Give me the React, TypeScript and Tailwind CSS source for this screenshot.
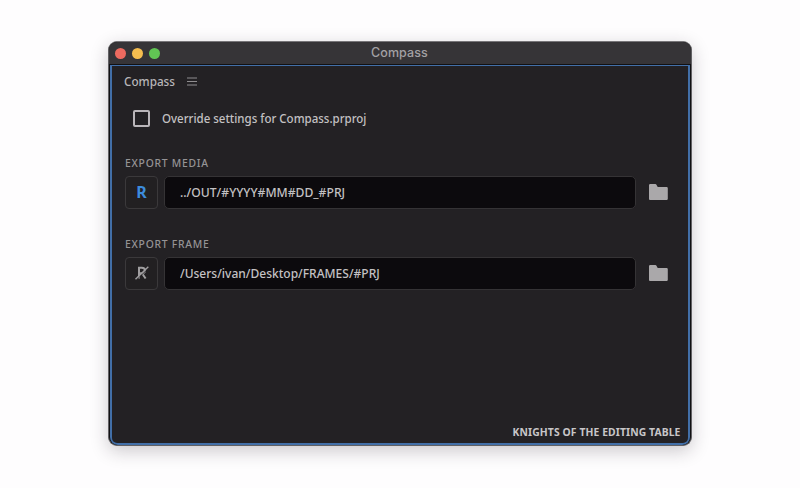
import React from 'react';

function Folder() {
  return (
    <svg width="20" height="18" viewBox="0 0 20 18" className="block" fill="#aaa8aa">
      <path d="M1 16V2.2Q1 1 2.2 1H7.3Q8.2 1 8.6 1.9L9.7 4H18.6Q19.8 4 19.8 5.2V15.8Q19.8 17 18.6 17H2Q1 17 1 16Z" />
    </svg>
  );
}

function SlashedR() {
  return (
    <svg width="18" height="18" viewBox="0 0 18 18" fill="none">
      <path d="M6 14.5V3.8H8.8Q12 3.8 12 6.5Q12 9.2 8.8 9.2H6M9 9.2L12.6 14.5" stroke="#a09ea0" strokeWidth="2" />
      <path d="M3.4 15.9L15.9 3.9" stroke="#222022" strokeWidth="1" />
      <path d="M2.5 15.3L15.3 2.8" stroke="#a09ea0" strokeWidth="1.4" />
    </svg>
  );
}

function ExportRow({ label, value, relative, valueClass }: {
  label: string;
  value: string;
  relative: boolean;
  valueClass: string;
}) {
  return (
    <section className="h-[81px]">
      <div className="h-[20px] origin-left scale-x-[0.94] whitespace-nowrap text-[11px] font-medium leading-[14px] tracking-[0.8px] text-[#959395]">{label}</div>
      <div className="flex h-[32px] items-center">
        <button className="flex h-[33px] w-[33px] shrink-0 items-center justify-center rounded-[4px] border border-[#3b393b] bg-[#222022]">
          {relative ? (
            <span className="text-[16px] font-bold leading-[18px] text-[#3c8bdc]">R</span>
          ) : (
            <SlashedR />
          )}
        </button>
        <div className="ml-[6px] flex h-[33px] w-[472px] items-center rounded-[5px] border border-[#353335] bg-[#0c0a0d] pb-[1px] pl-[15px]">
          <span className={`inline-block origin-left whitespace-nowrap text-[13px] font-medium leading-[18px] text-[#c3c1c3] ${valueClass}`}>{value}</span>
        </div>
        <div className="ml-[12px]"><Folder /></div>
      </div>
    </section>
  );
}

export default function App() {
  return (
    <div className="h-[488px] w-[800px] overflow-hidden bg-[#fefdfe] pl-[108px] pt-[41px] font-['Noto_Sans',sans-serif]">
      <main className="flex h-[405px] w-[584px] flex-col overflow-hidden rounded-[9px] border border-[#626164] border-t-[#777578] bg-[#111012] shadow-[0_5px_18px_rgba(35,25,40,0.23)]">
        <header className="flex h-[22px] shrink-0 items-center bg-[#363437] pl-[6px]">
          <div className="flex w-[120px] gap-[6px]">
            <i className="h-[11px] w-[11px] rounded-full bg-[#ed6a5f]" />
            <i className="h-[11px] w-[11px] rounded-full bg-[#f5bd4f]" />
            <i className="h-[11px] w-[11px] rounded-full bg-[#61c454]" />
          </div>
          <h1 className="ml-[136px] whitespace-nowrap font-['Inter',sans-serif] text-[12.5px] font-medium leading-[20px] tracking-[0.1px] text-[#a3a1a4]">Compass</h1>
        </header>
        <div className="mt-[1px] flex flex-1 flex-col rounded-b-[8px] bg-[#426fa8] px-[2px] pb-[2px] pt-px mx-px">
          <div className="flex flex-1 flex-col rounded-b-[5px] bg-[#232124]">
            <div className="flex h-[30px] items-center pl-[12px]">
              <span className="w-[51px] origin-left scale-x-[0.9] text-[13px] font-medium leading-[18px] text-[#b8b6b8]">Compass</span>
              <svg className="ml-[12px]" width="10" height="9" viewBox="0 0 10 9" stroke="#8f8d8f">
                <path d="M0 1H10M0 4.5H10M0 8H10" />
              </svg>
            </div>
            <label className="flex h-[44px] items-center pl-[21px]">
              <span className="h-[17px] w-[17px] rounded-[2px] border-2 border-[#bab6ba]" />
              <span className="ml-[12px] origin-left scale-x-[0.885] whitespace-nowrap text-[13px] font-medium leading-[18px] text-[#c3c1c3]">Override settings for Compass.prproj</span>
            </label>
            <div className="pl-[13px] pt-[16px]">
              <ExportRow label="EXPORT MEDIA" value="../OUT/#YYYY#MM#DD_#PRJ" relative valueClass="scale-x-[0.935]" />
              <ExportRow label="EXPORT FRAME" value="/Users/ivan/Desktop/FRAMES/#PRJ" relative={false} valueClass="scale-x-[0.925]" />
            </div>
            <footer className="mt-auto origin-right scale-x-[0.94] pb-[3px] pr-[8px] text-right text-[11px] font-bold leading-[16px] tracking-[0.12px] text-[#c8c6c8]">KNIGHTS OF THE EDITING TABLE</footer>
          </div>
        </div>
      </main>
    </div>
  );
}
